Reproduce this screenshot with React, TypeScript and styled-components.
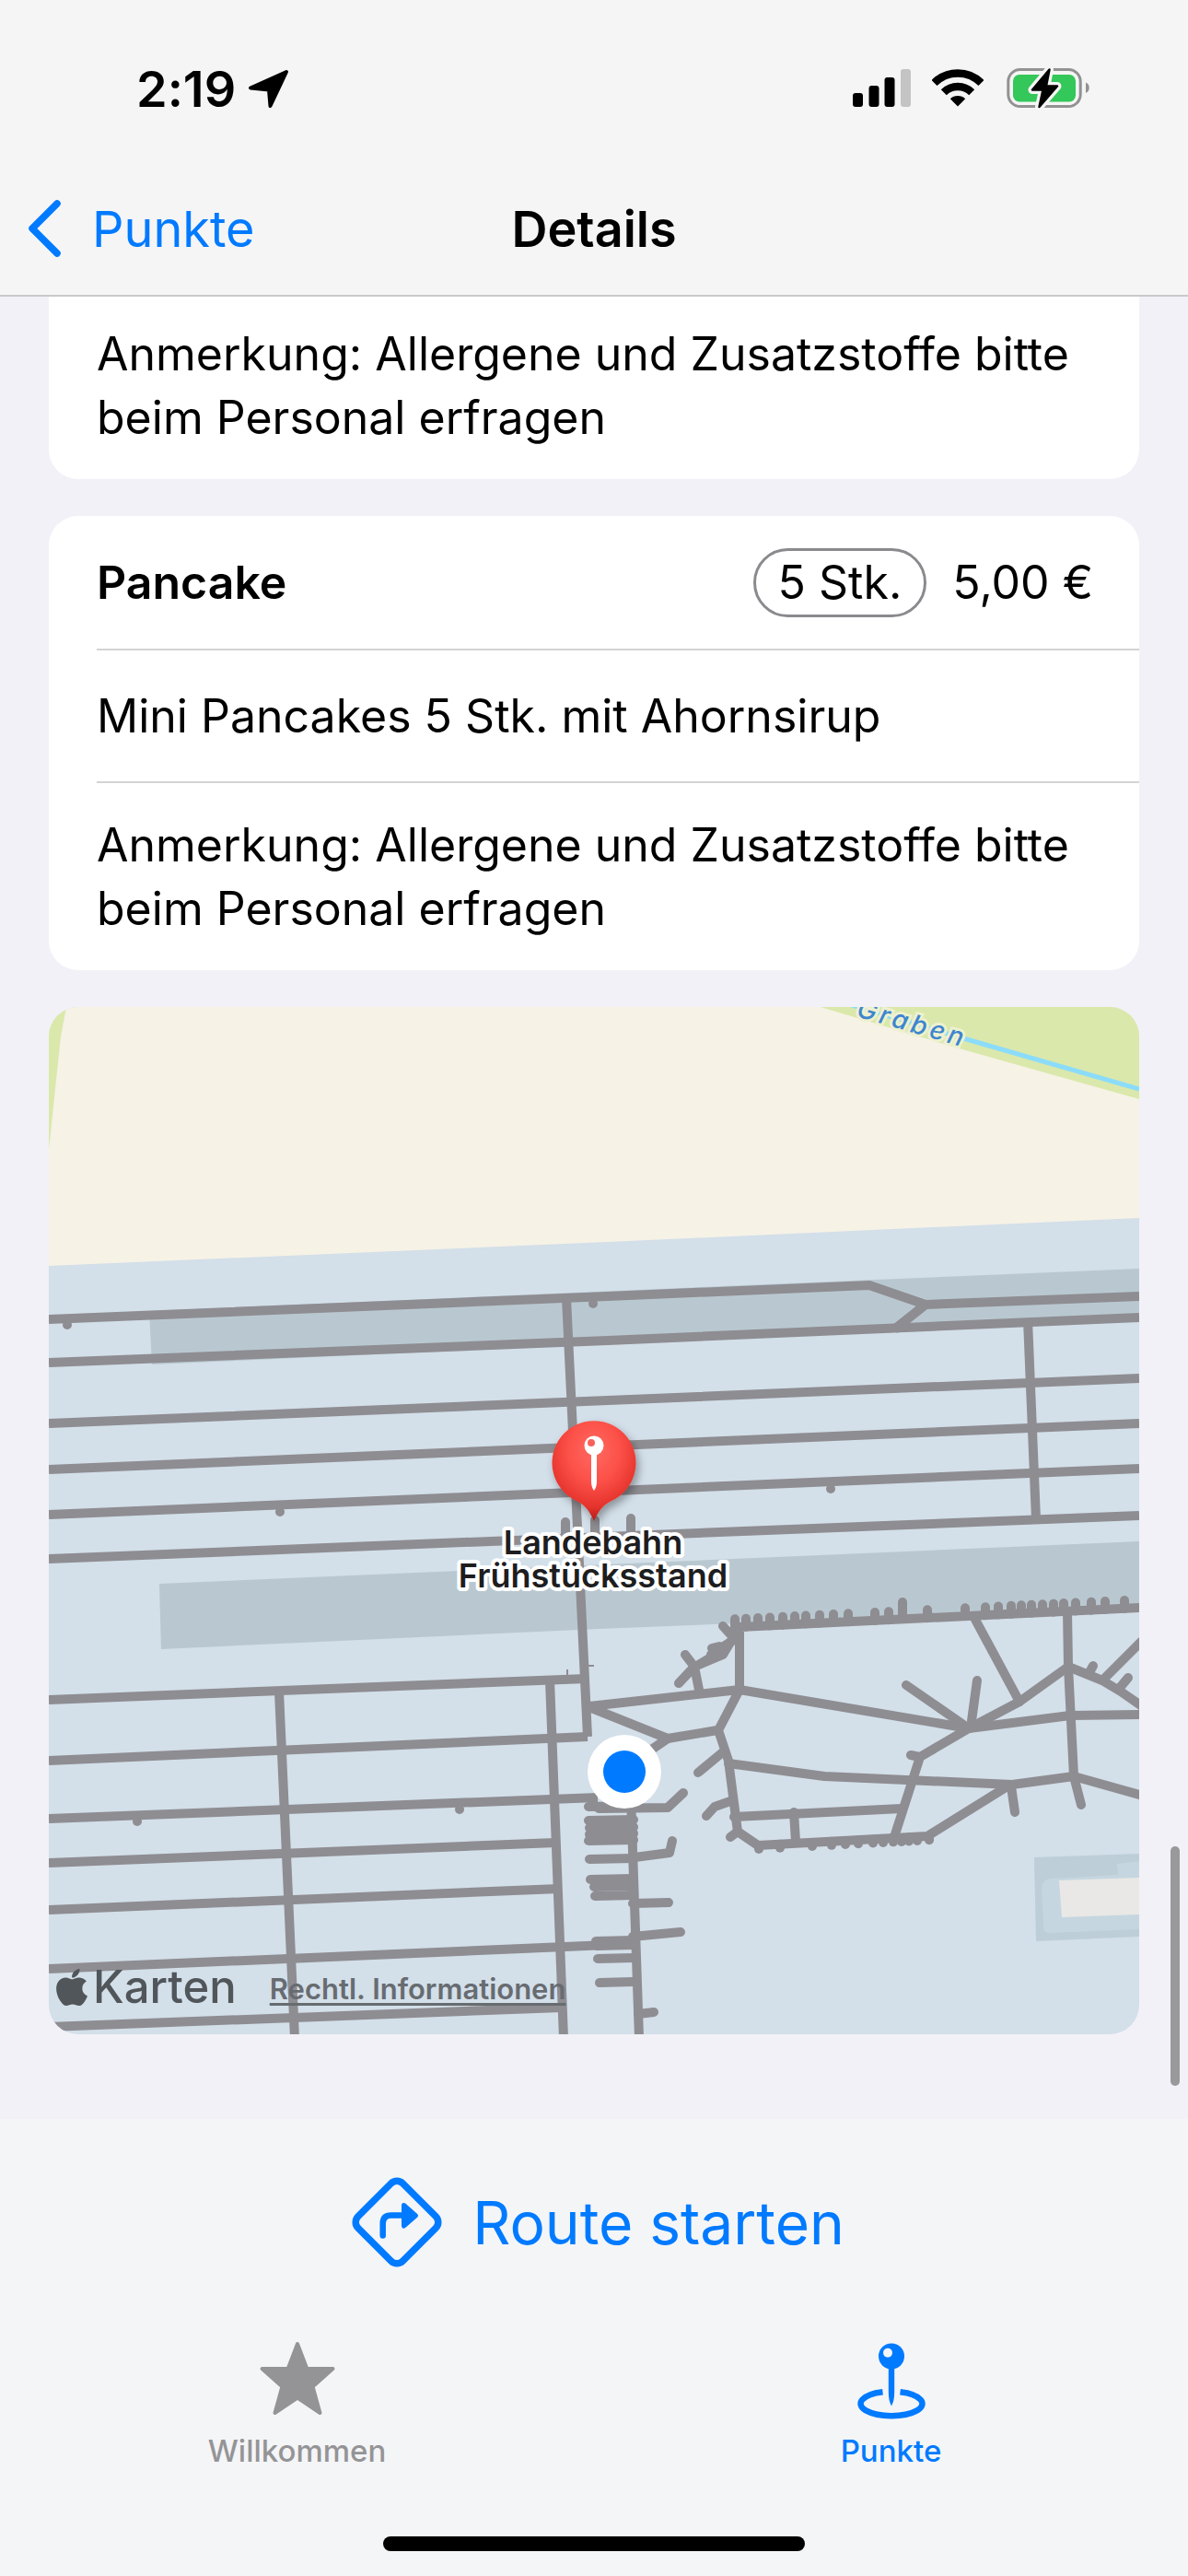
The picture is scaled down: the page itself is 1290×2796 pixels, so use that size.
import React from 'react';
import styled, { createGlobalStyle } from 'styled-components';
import { FaApple } from 'react-icons/fa';

const BLUE = '#007aff';
const GREY = '#949496';
const ROAD = '#8e8d92';

const GlobalStyle = createGlobalStyle`
  * {
    box-sizing: border-box;
  }

  body {
    margin: 0;
    background: #f2f1f7;
    color: #000;
    font-family: Inter, 'Liberation Sans', sans-serif;
    font-size: 50px;
    font-variant-ligatures: none;
    line-height: 69px;
  }
`;

const Page = styled.div`
  display: flex;
  flex-direction: column;
  min-height: 100vh;
`;

const Header = styled.header`
  padding-top: 16px;
  background: #f5f5f5;
  border-bottom: 2px solid #c9c9cc;
`;

const StatusBar = styled.div`
  display: flex;
  justify-content: space-between;
  align-items: center;
  height: 160px;
  padding: 0 104px 0 148px;
`;

const StatusGroup = styled.div<{ $gap: number }>`
  display: flex;
  align-items: center;
  gap: ${({ $gap }) => $gap}px;
`;

const Clock = styled.span`
  font-size: 54px;
  font-weight: 600;
`;

const NavBar = styled.nav`
  display: grid;
  grid-template-columns: 1fr auto 1fr;
  align-items: center;
  height: 144px;
  padding: 0 28px;
`;

const PlainButton = styled.button`
  display: flex;
  align-items: center;
  padding: 0;
  background: none;
  border: none;
  color: ${BLUE};
  font: inherit;
  cursor: pointer;
`;

const BackButton = styled(PlainButton)`
  gap: 32px;
  justify-self: start;
  font-size: 54px;
`;

const Title = styled.h1`
  margin: 0;
  font-size: 54px;
  font-weight: 600;
`;

const Main = styled.main`
  position: relative;
  display: flex;
  flex: 1;
  flex-direction: column;
  gap: 40px;
  padding: 0 53px 92px;
`;

const Card = styled.section<{ $continued?: boolean }>`
  padding-left: 52px;
  background: #fff;
  border-radius: ${({ $continued }) => ($continued ? '0 0 32px 32px' : '32px')};
`;

const Row = styled.div`
  display: flex;
  align-items: center;
  min-height: 144px;
  padding: 28px 48px 32px 0;

  & + & {
    padding-top: 33px;
    border-top: 2px solid #d3d3d6;
  }
`;

const DishRow = styled(Row)`
  gap: 28px;
  padding: 0 50px 0 0;
`;

const DishName = styled.h2`
  flex: 1;
  margin: 0;
  font-size: inherit;
  font-weight: 600;
`;

const Portion = styled.span`
  padding: 0 24px;
  border: 3px solid #8a8a8e;
  border-radius: 38px;
`;

const MapCard = styled.section`
  position: relative;
  overflow: hidden;
  border-radius: 32px;

  > svg {
    display: block;
    width: 100%;
    height: auto;
  }
`;

const Attribution = styled.div`
  position: absolute;
  left: 2px;
  bottom: 20px;
  display: flex;
  align-items: center;
  color: #50565a;
  font-size: 49px;
  font-weight: 500;
  line-height: 58px;
`;

const LegalLink = styled.a`
  margin-left: 36px;
  padding-top: 4px;
  color: #676c71;
  font-size: 31px;
  font-weight: 600;
  text-decoration: underline;
  text-decoration-thickness: 3px;
  text-underline-offset: 4px;
`;

const ScrollThumb = styled.div`
  position: absolute;
  right: 9px;
  bottom: 36px;
  width: 10px;
  height: 260px;
  background: #99999c;
  border-radius: 5px;
`;

const BottomBar = styled.footer`
  display: flex;
  flex-direction: column;
  align-items: center;
  padding: 62px 0 27px;
  background: #f4f5f7;
`;

const RouteButton = styled(PlainButton)`
  gap: 32px;
  height: 100px;
  padding-left: 8px;
  font-size: 64px;
`;

const TabBar = styled.nav`
  display: grid;
  grid-template-columns: 1fr 1fr;
  width: 100%;
  margin-top: 78px;
`;

const Tab = styled(PlainButton)<{ $active?: boolean }>`
  flex-direction: column;
  gap: 18px;
  color: ${({ $active }) => ($active ? BLUE : GREY)};
  font-size: 33px;
  font-weight: 500;
  line-height: 36px;
`;

const HomeIndicator = styled.div`
  width: 458px;
  height: 16px;
  margin-top: 75px;
  background: #000;
  border-radius: 8px;
`;

const LocationArrow = () => (
  <svg width="48" height="46" viewBox="0 0 48 46">
    <path d="M43 5 4 22.500 24 24.500 25.500 42Z" stroke="#000" strokeWidth="4" strokeLinejoin="round" />
  </svg>
);

const Signal = () => (
  <svg width="64" height="42" viewBox="0 0 64 42">
    <rect x="0" y="26" width="11" height="15" rx="3" />
    <rect x="17.500" y="18" width="11" height="23" rx="3" />
    <rect x="34.500" y="9" width="11" height="32" rx="3" />
    <rect x="52" y="0" width="11" height="41" rx="3" fill="#c4c4c4" />
  </svg>
);

const Wifi = () => (
  <svg width="56" height="42" viewBox="0 0 56 42">
    <path d="M2.500 15A36 36 0 0 1 53.500 15M12.800 25.300A21.500 21.500 0 0 1 43.200 25.300" fill="none" stroke="#000" strokeWidth="8.500" />
    <path d="M28 40.500 19.800 32.300A12 12 0 0 1 36.200 32.300Z" />
  </svg>
);

const Battery = () => {
  const bolt = 'M49.500 3.500 31 25.500H42.500L38.500 44 58 21.500H46Z';
  return (
    <svg width="96" height="48" viewBox="0 0 96 48">
      <rect x="4.800" y="3.500" width="78.400" height="40" rx="13" fill="none" stroke="#929293" strokeWidth="3" />
      <rect x="10" y="9" width="68" height="29.500" rx="7" fill="#34c759" />
      <path d="M89 17.500C94 19.500 94 27 89 29Z" fill="#929293" />
      <path d={bolt} fill="#f5f5f5" stroke="#f5f5f5" strokeWidth="9" strokeLinejoin="round" />
      <path d={bolt} stroke="#000" strokeWidth="2.500" strokeLinejoin="round" />
    </svg>
  );
};

const Chevron = () => (
  <svg width="40" height="64" viewBox="0 0 40 64">
    <path d="M34 5 7 32 34 59" fill="none" stroke={BLUE} strokeWidth="7.500" strokeLinecap="round" strokeLinejoin="round" />
  </svg>
);

const RouteIcon = () => (
  <svg width="100" height="100" viewBox="0 0 100 100">
    <rect x="15.700" y="15.700" width="68.600" height="68.600" rx="9" transform="rotate(45 50 50)" fill="none" stroke={BLUE} strokeWidth="7.500" />
    <path d="M34.700 64.500V51.500Q34.700 42.500 43.700 42.500H57" fill="none" stroke={BLUE} strokeWidth="6.500" strokeLinecap="round" />
    <path d="M57.500 31.500 70.500 42.800 57.500 54Z" fill={BLUE} stroke={BLUE} strokeWidth="5" strokeLinejoin="round" />
  </svg>
);

const StarIcon = () => (
  <svg width="84" height="84" viewBox="0 0 84 84">
    <path
      d="M42 4 52.300 31H80.500L58.600 50.500 66.500 79 42 62.500 17.500 79 25.400 50.500 3.500 31H31.700Z"
      fill={GREY}
      stroke={GREY}
      strokeWidth="4"
      strokeLinejoin="round"
    />
  </svg>
);

const PinIcon = () => (
  <svg width="84" height="84" viewBox="0 0 84 84" overflow="visible">
    <circle cx="42" cy="17.500" r="14" fill={BLUE} />
    <circle cx="38" cy="13.700" r="5" fill="#f4f5f7" />
    <path d="M38.800 30H45.200V56Q45.200 66 42 71.500 38.800 66 38.800 56Z" fill={BLUE} />
    <path d="M51.500 56.300A33.500 13.200 0 1 1 32.500 56.300" fill="none" stroke={BLUE} strokeWidth="6.500" />
  </svg>
);

// longer roads, drawn edge to edge
const roads = [
  'M53 1432 660 1407 944 1395 1005 1416 1237 1407',
  'M1005 1416 971 1443',
  'M53 1479 660 1455 1237 1430',
  'M53 1545 660 1520 1237 1496',
  'M53 1595 1237 1545',
  'M53 1644 1237 1594',
  'M53 1692 1237 1645',
  'M615 1409 638 1885',
  'M1116 1433 1125 1649',
  'M53 1845 637 1822',
  'M53 1911 638 1885',
  'M53 1974 649 1951',
  'M53 2022 604 2000',
  'M53 2073 607 2050',
  'M53 2137 660 2111',
  'M53 2200 610 2179',
  'M303 1836 320 2212',
  'M597 1824 612 2212',
  'M685 1950 694 2212',
];

const paths = [
  'M640 1852 803 1834 1052 1876 1162 1862 1237 1861',
  'M640 1853 725 1887 779 1878',
  'M725 1887 703 1902',
  'M803 1834 780 1878 791 1911 801 1988 823 2003 1007 1993 1097 1937',
  'M787 1900 758 1924',
  'M791 1914 895 1928 1099 1937 1166 1928 1237 1948',
  'M793 1955 776 1961 767 1971',
  'M797 1972 979 1963',
  'M862 1967 864 1999',
  'M801 1988 793 1994',
  'M1052 1876 984 1829',
  'M1055 1868 1061 1824',
  'M1052 1876 1107 1847 1160 1809 1197 1824 1217 1836 1240 1852',
  'M1107 1847 1058 1756',
  'M1159 1749 1160 1809 1166 1928 1174 1959',
  'M1199 1822 1240 1781',
  'M1182 1817 1187 1808',
  'M1215 1833 1225 1821',
  'M1052 1876 999 1907 989 1905',
  'M999 1907 971 1994',
  'M1098 1939 1102 1967',
  'M803 1834V1766L1237 1745',
  'M803 1766 785 1796 754 1809 737 1827',
  'M798 1779 772 1796 M773 1789 781 1787 784 1792 760 1806',
  'M785 1765 795 1776',
  'M744 1796 754 1809 759 1834',
  'M650 1963 725 1962 742 1946',
  'M689 2016 727 2011 730 1998',
  'M687 2066 726 2065',
  'M687 2102 739 2097',
  'M693 2186 710 2184',
  'M614 1652V1675',
  'M646 1650V1668',
  'M685 1648V1668',
];

const sideStubs = [
  [639, 1961],
  [639, 1976],
  [640, 1984],
  [640, 1991],
  [639, 1998],
  [640, 2018],
  [641, 2040],
  [645, 2048],
  [646, 2058],
  [647, 2107],
  [648, 2112],
  [649, 2126],
  [651, 2152],
];

const upperTeeth = [
  798, 810, 823, 836, 850, 863, 875, 890, 905, 921, 950, 965, 1007, 1048, 1070, 1084, 1098, 1109, 1120, 1132, 1144,
  1155, 1168, 1185, 1200, 1221,
];
const lowerTeeth = [824, 847, 882, 903, 918, 932, 948, 959, 970, 979, 987, 996, 1009];

const lampPosts = [
  [73, 1438],
  [644, 1415],
  [304, 1641],
  [902, 1616],
  [149, 1977],
  [499, 1964],
];

const MapDrawing = () => (
  <svg viewBox="53 1093 1184 1115" role="img" aria-label="Karte">
    <defs>
      <radialGradient id="pinFill" cx="0.5" cy="0.3" r="0.7">
        <stop offset="0" stopColor="#ff6a62" />
        <stop offset="0.45" stopColor="#fc5048" />
        <stop offset="0.8" stopColor="#e5332c" />
        <stop offset="1" stopColor="#b01d18" />
      </radialGradient>
      <filter id="pinShadow" x="-30%" y="-30%" width="160%" height="160%">
        <feDropShadow dx="3" dy="5" stdDeviation="5" floodColor="#000" floodOpacity="0.35" />
      </filter>
    </defs>

    <rect x="53" y="1093" width="1184" height="1115" fill="#d3dfe9" />
    <path d="M53 1093H1237V1322L660 1348 53 1374Z" fill="#f6f2e6" />
    <path d="M53 1093H72L66 1125 53 1248Z" fill="#dae8ab" />
    <path d="M891 1093H1237V1193L1038 1137Z" fill="#dae8ab" />
    <path d="M905 1085 1046 1127 1237 1182" fill="none" stroke="#8bdcfa" strokeWidth="5" />
    <text
      transform="translate(929 1103) rotate(16)"
      fill="#3d86cf"
      stroke="#eef1d0"
      strokeWidth="6"
      paintOrder="stroke"
      fontSize="28"
      fontStyle="italic"
      fontWeight="500"
      letterSpacing="4"
    >
      Graben
    </text>

    <path d="M162 1423 950 1389 1237 1377V1433L165 1481Z" fill="#b9c8d0" />
    <path d="M173 1719 1237 1673V1745L650 1768 175 1790Z" fill="#b9c8d0" />

    <path d="M1123 2016 1237 2012V2102L1125 2107Z" fill="#bdced9" />
    <path d="M1131 2050Q1131 2040 1141 2039L1214 2035 1213 2023 1237 2020V2094L1140 2098Q1133 2098 1133 2090Z" fill="#c5d6e0" />
    <path d="M1150 2041 1237 2038V2078L1153 2081Z" fill="#e9e8e6" />

    <g fill="none" stroke={ROAD} strokeWidth="10" strokeLinejoin="round">
      {roads.map((d) => (
        <path key={d} d={d} />
      ))}
      <g strokeLinecap="round">
        {paths.map((d) => (
          <path key={d} d={d} />
        ))}
        {sideStubs.map(([x, y]) => (
          <path key={y} d={`M${x} ${y}L688 ${y - 1}`} />
        ))}
        {upperTeeth.map((x) => {
          const y = 1766 - (x - 803) * 0.048;
          return <path key={x} d={`M${x} ${y}V${y - 9}`} />;
        })}
        <path d="M980 1757V1739" />
        {lowerTeeth.map((x) => {
          const y = 2003 - (x - 823) * 0.052;
          return <path key={x} d={`M${x} ${y}V${y + 4}`} />;
        })}
      </g>
      <path d="M616 1812V1820M639 1808H645" strokeWidth="2" />
    </g>
    {lampPosts.map(([x, y]) => (
      <circle key={x} cx={x} cy={y} r="5" fill={ROAD} />
    ))}

    <circle cx="678" cy="1923" r="40" fill="#fff" />
    <circle cx="678" cy="1923" r="23" fill={BLUE} />

    <path
      d="M645 1651C640 1640 636 1634 626 1629A45.500 45.500 0 1 1 664 1629C654 1634 650 1640 645 1651Z"
      fill="url(#pinFill)"
      filter="url(#pinShadow)"
    />
    <circle cx="645" cy="1569" r="10.500" fill="#fff" />
    <circle cx="642" cy="1566" r="4" fill="#f9625b" />
    <path d="M642 1578H648V1608Q648 1614 645 1618 642 1614 642 1608Z" fill="#fff" />

    <text
      fill="#1d1d1f"
      stroke="#fff"
      strokeWidth="8"
      strokeLinejoin="round"
      paintOrder="stroke"
      fontSize="36"
      fontWeight="600"
      textAnchor="middle"
    >
      <tspan x="644" y="1687">
        Landebahn
      </tspan>
      <tspan x="644" y="1723">
        Frühstücksstand
      </tspan>
    </text>
  </svg>
);

const App = () => {
  return (
    <Page>
      <GlobalStyle />
      <Header>
        <StatusBar>
          <StatusGroup $gap={12}>
            <Clock>2:19</Clock>
            <LocationArrow />
          </StatusGroup>
          <StatusGroup $gap={22}>
            <Signal />
            <Wifi />
            <Battery />
          </StatusGroup>
        </StatusBar>
        <NavBar>
          <BackButton>
            <Chevron />
            Punkte
          </BackButton>
          <Title>Details</Title>
        </NavBar>
      </Header>

      <Main>
        <Card $continued>
          <Row>Anmerkung: Allergene und Zusatzstoffe bitte beim Personal erfragen</Row>
        </Card>
        <Card>
          <DishRow>
            <DishName>Pancake</DishName>
            <Portion>5 Stk.</Portion>
            <span>5,00 €</span>
          </DishRow>
          <Row>Mini Pancakes 5 Stk. mit Ahornsirup</Row>
          <Row>Anmerkung: Allergene und Zusatzstoffe bitte beim Personal erfragen</Row>
        </Card>
        <MapCard>
          <MapDrawing />
          <Attribution>
            <FaApple size={46} />
            <span>Karten</span>
            <LegalLink href="#legal">Rechtl. Informationen</LegalLink>
          </Attribution>
        </MapCard>
        <ScrollThumb />
      </Main>

      <BottomBar>
        <RouteButton>
          <RouteIcon />
          Route starten
        </RouteButton>
        <TabBar>
          <Tab>
            <StarIcon />
            Willkommen
          </Tab>
          <Tab $active>
            <PinIcon />
            Punkte
          </Tab>
        </TabBar>
        <HomeIndicator />
      </BottomBar>
    </Page>
  );
};

export default App;
